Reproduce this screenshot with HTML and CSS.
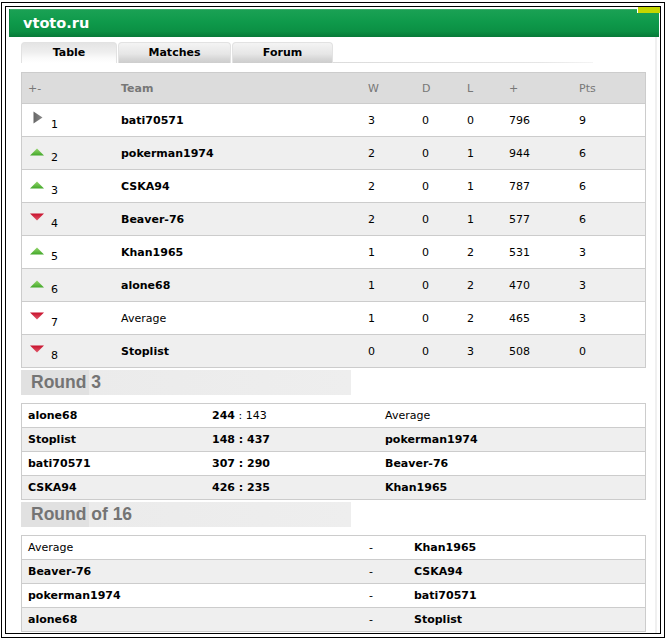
FILE: index.html
```html
<!DOCTYPE html>
<html>
<head>
<meta charset="utf-8">
<link rel="stylesheet" href="styles.css">
</head>
<body>
<div class="outer">
  <div class="inner">
    <div class="accent"></div>
    <div class="header">vtoto.ru</div>
    <div class="main">
      <div class="tabs">
        <div class="tab tab1 active">Table</div>
        <div class="tab tab2">Matches</div>
        <div class="tab tab3">Forum</div>
        <div class="tabline"></div>
      </div>

      <div class="standings">
        <div class="row head">
          <div class="c rankh">+-</div>
          <div class="c b">Team</div>
          <div class="c">W</div>
          <div class="c">D</div>
          <div class="c">L</div>
          <div class="c">+</div>
          <div class="c">Pts</div>
        </div>
        <div class="row">
          <div class="c rank"><span class="ico same"><svg width="10" height="13" viewBox="0 0 10 13"><defs><linearGradient id="gg" x1="0" y1="0" x2="1" y2="0"><stop offset="0" stop-color="#666"/><stop offset="1" stop-color="#8a8a8a"/></linearGradient></defs><path d="M0.5 0.5 L9.5 6.5 L0.5 12.5 Z" fill="url(#gg)"/></svg></span><span class="num">1</span></div>
          <div class="c b">bati70571</div><div class="c">3</div><div class="c">0</div><div class="c">0</div><div class="c">796</div><div class="c">9</div>
        </div>
        <div class="row alt">
          <div class="c rank"><span class="ico up"><svg width="14" height="8" viewBox="0 0 14 8"><defs><linearGradient id="ug" x1="0" y1="0" x2="0" y2="1"><stop offset="0" stop-color="#93d56b"/><stop offset="1" stop-color="#43a82a"/></linearGradient></defs><path d="M0 7.5 L7 0.5 L14 7.5 Z" fill="url(#ug)"/></svg></span><span class="num">2</span></div>
          <div class="c b">pokerman1974</div><div class="c">2</div><div class="c">0</div><div class="c">1</div><div class="c">944</div><div class="c">6</div>
        </div>
        <div class="row">
          <div class="c rank"><span class="ico up"><svg width="14" height="8" viewBox="0 0 14 8"><path d="M0 7.5 L7 0.5 L14 7.5 Z" fill="url(#ug)"/></svg></span><span class="num">3</span></div>
          <div class="c b">CSKA94</div><div class="c">2</div><div class="c">0</div><div class="c">1</div><div class="c">787</div><div class="c">6</div>
        </div>
        <div class="row alt">
          <div class="c rank"><span class="ico down"><svg width="14" height="8" viewBox="0 0 14 8"><defs><linearGradient id="dg" x1="0" y1="0" x2="0" y2="1"><stop offset="0" stop-color="#c8102c"/><stop offset="1" stop-color="#e0586a"/></linearGradient></defs><path d="M0 0.5 L14 0.5 L7 7.5 Z" fill="url(#dg)"/></svg></span><span class="num">4</span></div>
          <div class="c b">Beaver-76</div><div class="c">2</div><div class="c">0</div><div class="c">1</div><div class="c">577</div><div class="c">6</div>
        </div>
        <div class="row">
          <div class="c rank"><span class="ico up"><svg width="14" height="8" viewBox="0 0 14 8"><path d="M0 7.5 L7 0.5 L14 7.5 Z" fill="url(#ug)"/></svg></span><span class="num">5</span></div>
          <div class="c b">Khan1965</div><div class="c">1</div><div class="c">0</div><div class="c">2</div><div class="c">531</div><div class="c">3</div>
        </div>
        <div class="row alt">
          <div class="c rank"><span class="ico up"><svg width="14" height="8" viewBox="0 0 14 8"><path d="M0 7.5 L7 0.5 L14 7.5 Z" fill="url(#ug)"/></svg></span><span class="num">6</span></div>
          <div class="c b">alone68</div><div class="c">1</div><div class="c">0</div><div class="c">2</div><div class="c">470</div><div class="c">3</div>
        </div>
        <div class="row">
          <div class="c rank"><span class="ico down"><svg width="14" height="8" viewBox="0 0 14 8"><path d="M0 0.5 L14 0.5 L7 7.5 Z" fill="url(#dg)"/></svg></span><span class="num">7</span></div>
          <div class="c">Average</div><div class="c">1</div><div class="c">0</div><div class="c">2</div><div class="c">465</div><div class="c">3</div>
        </div>
        <div class="row alt last">
          <div class="c rank"><span class="ico down"><svg width="14" height="8" viewBox="0 0 14 8"><path d="M0 0.5 L14 0.5 L7 7.5 Z" fill="url(#dg)"/></svg></span><span class="num">8</span></div>
          <div class="c b">Stoplist</div><div class="c">0</div><div class="c">0</div><div class="c">3</div><div class="c">508</div><div class="c">0</div>
        </div>
      </div>

      <div class="rhead">Round 3</div>
      <div class="mtable r3">
        <div class="mrow"><div class="c b">alone68</div><div class="c"><span><b>244</b> : 143</span></div><div class="c">Average</div></div>
        <div class="mrow alt"><div class="c b">Stoplist</div><div class="c b">148 : 437</div><div class="c b">pokerman1974</div></div>
        <div class="mrow"><div class="c b">bati70571</div><div class="c b">307 : 290</div><div class="c b">Beaver-76</div></div>
        <div class="mrow alt last"><div class="c b">CSKA94</div><div class="c b">426 : 235</div><div class="c b">Khan1965</div></div>
      </div>

      <div class="rhead">Round of 16</div>
      <div class="mtable r16">
        <div class="mrow"><div class="c">Average</div><div class="c">-</div><div class="c b">Khan1965</div></div>
        <div class="mrow alt"><div class="c b">Beaver-76</div><div class="c">-</div><div class="c b">CSKA94</div></div>
        <div class="mrow"><div class="c b">pokerman1974</div><div class="c">-</div><div class="c b">bati70571</div></div>
        <div class="mrow alt last"><div class="c b">alone68</div><div class="c">-</div><div class="c b">Stoplist</div></div>
      </div>
    </div>
  </div>
</div>
</body>
</html>
```
FILE: styles.css
```css
* { box-sizing: border-box; }
html, body { margin: 0; padding: 0; background: #fff; }
body {
  font-family: "DejaVu Sans", Verdana, sans-serif;
  font-size: 11px;
  color: #000;
}
.outer {
  margin: 2px 0 0 1px;
  width: 664px;
  height: 636px;
  border: 1px solid #000;
  padding: 3px;
}
.inner {
  position: relative;
  height: 100%;
  border: 1px solid #000;
  padding: 2px 1px 0 3px;
}
.accent {
  position: absolute;
  top: 0;
  right: 0;
  width: 23px;
  height: 6px;
  background: #c4d600;
  border-left: 1px solid #fff;
}
.header {
  height: 28px;
  padding: 1px 0 0 13px;
  line-height: 27px;
  color: #fff;
  font-weight: bold;
  font-size: 14.5px;
  background: linear-gradient(#5ab97e 0, #1aa154 1px, #0f9a4b 45%, #0b9044 80%, #077a38 100%);
  border-left: 1px solid #0a7d3b;
}
.main {
  padding: 5px 0 0 12px;
  margin-right: 2px;
  border-right: 2px solid #f0f0f0;
  height: 596px;
}
.tabs {
  display: flex;
  align-items: flex-end;
  height: 21px;
}
.tab {
  height: 21px;
  padding-top: 0;
  line-height: 19px;
  text-align: center;
  font-weight: bold;
  border: 1px solid #e2e2e2;
  border-bottom: none;
  border-radius: 4px 4px 0 0;
  background: linear-gradient(#f4f4f4 0, #e6e6e6 55%, #d6d6d6 80%, #cdcdcd 100%);
}
.tab1 { width: 96px; }
.tab2 { width: 113px; margin-left: 1px; }
.tab3 { width: 101px; margin-left: 1px; }
.tab.active {
  background: linear-gradient(#e4e4e4 0, #eeeeee 45%, #fafafa 75%, #fff 100%);
}
.tabline {
  width: 260px;
  height: 1px;
  background: linear-gradient(to right, #dcdcdc, #e6e6e6 80%, #f4f4f4);
}
.standings {
  margin-top: 9px;
  width: 625px;
  border: 1px solid #ccc;
}
.row {
  display: grid;
  grid-template-columns: 93px 247px 54px 45px 42px 70px 1fr;
  height: 33px;
  border-bottom: 1px solid #ccc;
  background: #fff;
}
.row.alt { background: #efefef; }
.row.last { border-bottom: none; height: 32px; }
.row.head {
  height: 31px;
  background: #dcdcdc;
  color: #777;
}
.c {
  display: flex;
  align-items: center;
  padding-left: 6px;
  line-height: 13px;
  white-space: nowrap;
}
.b { font-weight: bold; }
.rank {
  align-items: flex-start;
  padding-left: 8px;
}
.ico { width: 21px; display: block; }
.ico svg { display: block; }
.ico.same svg { margin: 7px 0 0 3px; }
.ico.up svg { margin-top: 11px; }
.ico.down svg { margin-top: 10px; }
.num { margin-top: 14px; }
.rhead {
  margin-top: 2px;
  width: 330px;
  height: 25px;
  line-height: 25px;
  padding-left: 10px;
  font-family: "Liberation Sans", Arial, sans-serif;
  font-weight: bold;
  font-size: 17.5px;
  color: #747474;
  background: linear-gradient(to right, #e1e1e1 0, #e1e1e1 68px, #ebebeb 68px, #eeeeee 100%);
}
.mtable {
  margin-top: 8px;
  width: 625px;
  border: 1px solid #ccc;
}
.mrow {
  display: grid;
  height: 24px;
  border-bottom: 1px solid #ccc;
  background: #fff;
}
.mrow.alt { background: #efefef; }
.mrow.last { border-bottom: none; height: 23px; }
.r3 .mrow { grid-template-columns: 184px 173px 1fr; }
.r16 .mrow { grid-template-columns: 341px 45px 1fr; }
```
